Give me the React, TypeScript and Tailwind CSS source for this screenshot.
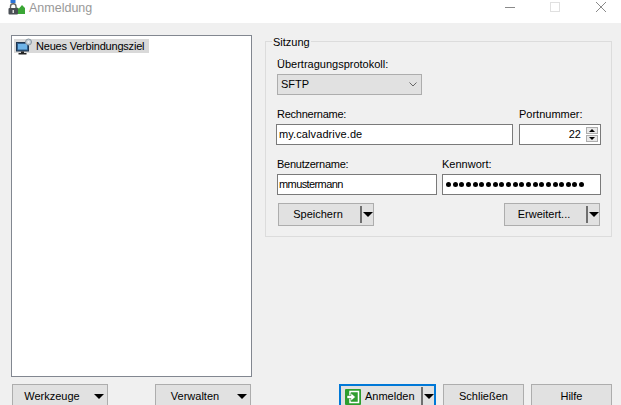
import React from "react";

const font = { fontFamily: '"Liberation Sans", Arial, sans-serif' };

function Caret() {
  return <span className="block h-0 w-0 border-x-[5px] border-t-[5px] border-x-transparent border-t-black" />;
}

function SplitButton({ label }: { label: string }) {
  return (
    <div className="flex h-[23px] w-[96px] items-center border border-[#adadad] bg-[#e1e1e1]">
      <span className="w-[81px] pr-[3px] text-center">{label}</span>
      <span className="h-[17px] w-[2px] bg-[#6f6f6f]" />
      <span className="ml-px"><Caret /></span>
    </div>
  );
}

function Label({ children, tight }: { children: React.ReactNode; tight?: boolean }) {
  return <div className={`h-[18px] leading-[16px] ${tight ? "tracking-[-0.25px]" : ""}`}>{children}</div>;
}

function ComputerIcon() {
  return (
    <svg className="-my-[2px] shrink-0" width="18" height="17" viewBox="0 0 18 17">
      <rect x="1.5" y="4.5" width="12" height="8.5" fill="#2f5e8e" stroke="#20364f" />
      <rect x="3" y="6" width="9" height="5.5" fill="#6fb4e8" />
      <rect x="6" y="13.5" width="3" height="1.5" fill="#222" />
      <rect x="3.5" y="15" width="8" height="1.5" fill="#222" />
      <circle cx="13.5" cy="4" r="3" fill="#c4cfd8" stroke="#8b98a3" />
      <circle cx="13.5" cy="4" r="1" fill="#eef2f5" />
    </svg>
  );
}

function AppIcon() {
  return (
    <svg width="18" height="15" viewBox="0 0 18 15">
      <rect x="2.5" y="0" width="5" height="3" fill="#2b72d6" />
      <path d="M8 7 L11 8.5 L14 5 L17 8 L17 14 L9 14 Z" fill="#3aa635" />
      <path d="M2.5 8 V6.5 a2.75 2.75 0 0 1 5.5 0 V8" fill="none" stroke="#666" strokeWidth="1.4" />
      <rect x="0.5" y="8" width="9.5" height="6.5" rx="1" fill="#4a4f55" />
      <rect x="4.5" y="10" width="1.5" height="3" fill="#ddd" />
    </svg>
  );
}

function LoginIcon() {
  return (
    <svg width="16" height="16" viewBox="0 0 16 16">
      <rect x="0" y="0" width="16" height="16" rx="1" fill="#2e9e2e" />
      <rect x="5" y="2.5" width="8.5" height="11" fill="none" stroke="#fff" strokeWidth="1.5" />
      <path d="M2 6.5 H6 V4 L10.5 8 L6 12 V9.5 H2 Z" fill="#fff" stroke="#1c7a1c" strokeWidth="0.5" />
    </svg>
  );
}

export default function App() {
  return (
    <div className="flex h-[405px] w-[621px] flex-col overflow-hidden bg-[#f0f0f0] text-[11px] text-black" style={font}>
      <header className="flex h-[23px] shrink-0 items-start bg-white">
        <span className="ml-[8px] flex w-[21px]"><AppIcon /></span>
        <span className="pt-px text-[12.5px] leading-[15px] text-[#999]">Anmeldung</span>
        <div className="ml-auto flex h-[14px] items-center">
          <span className="mr-[35px] h-px w-[10px] bg-[#8a8a8a]" />
          <span className="mr-[36px] h-[10px] w-[10px] border border-[#e0e0e0]" />
          <svg className="mr-[15px]" width="10" height="10" viewBox="0 0 10 10">
            <path d="M0 0 L10 10 M10 0 L0 10" stroke="#8a8a8a" strokeWidth="1" />
          </svg>
        </div>
      </header>

      <div className="flex flex-1 flex-col">
        <div className="flex h-[361px] shrink-0">
          <div className="mb-[7px] ml-[11px] mt-[12px] w-[241px] border border-[#828790] bg-white px-[2px] pt-[3px]">
            <div className="flex h-[14px] w-[135px] items-center gap-[3px] whitespace-nowrap bg-[#d9d9d9] pl-[1px] tracking-[-0.2px]">
              <ComputerIcon />
              <span>Neues Verbindungsziel</span>
            </div>
          </div>

          <section className="relative ml-[13px] mt-[18px] h-[196px] w-[347px] border border-[#dcdcdc] pl-[11px] pt-[14px]">
            <span className="absolute -top-[7px] left-[6px] bg-[#f0f0f0] px-px leading-[14px]">Sitzung</span>
            <Label>Übertragungsprotokoll:</Label>
            <div className="flex h-[21px] w-[145px] items-center justify-between border border-[#adadad] bg-[#e1e1e1] pl-[3px] pr-[4px]">
              SFTP
              <svg width="8" height="5" viewBox="0 0 8 5"><path d="M.5.5 L4 4 L7.5.5" fill="none" stroke="#666" /></svg>
            </div>

            <div className="mt-[11px] flex gap-[6px]">
              <div>
                <Label tight>Rechnername:</Label>
                <div className="-ml-px flex h-[21px] w-[237px] items-center border border-[#7a7a7a] bg-white pl-[2px] tracking-[0.1px]">my.calvadrive.de</div>
              </div>
              <div>
                <Label>Portnummer:</Label>
                <div className="flex h-[21px] w-[82px] items-center justify-end border border-[#7a7a7a] bg-white pr-[2px]">
                  <span className="mr-[5px]">22</span>
                  <div className="flex flex-col gap-px">
                    <span className="flex h-[7px] w-[12px] items-center justify-center border border-[#adadad] bg-[#e8e8e8]">
                      <span className="h-0 w-0 border-x-[3px] border-b-[3px] border-x-transparent border-b-black" />
                    </span>
                    <span className="flex h-[7px] w-[12px] items-center justify-center border border-[#adadad] bg-[#e8e8e8]">
                      <span className="h-0 w-0 border-x-[3px] border-t-[3px] border-x-transparent border-t-black" />
                    </span>
                  </div>
                </div>
              </div>
            </div>

            <div className="mt-[11px] flex gap-[5px]">
              <div>
                <Label tight>Benutzername:</Label>
                <div className="flex h-[21px] w-[160px] items-center border border-[#7a7a7a] bg-white pl-px tracking-[-0.6px]">mmustermann</div>
              </div>
              <div>
                <Label>Kennwort:</Label>
                <div className="flex h-[21px] w-[159px] items-center gap-[1.67px] border border-[#7a7a7a] bg-white pl-[3px]">
                  {Array.from({ length: 21 }).map((_, i) => (
                    <span key={i} className="h-[5px] w-[5px] shrink-0 rounded-full bg-black" />
                  ))}
                </div>
              </div>
            </div>

            <div className="ml-px mr-[11px] mt-[8px] flex justify-between">
              <SplitButton label="Speichern" />
              <SplitButton label="Erweitert..." />
            </div>
          </section>
        </div>

        <footer className="flex items-start whitespace-nowrap pl-[12px]">
          <div className="flex h-[25px] w-[96px] items-center border border-[#adadad] bg-[#e1e1e1]">
            <span className="w-[78px] text-center">Werkzeuge</span>
            <span className="ml-[3px]"><Caret /></span>
          </div>
          <div className="ml-[47px] flex h-[25px] w-[96px] items-center border border-[#adadad] bg-[#e1e1e1]">
            <span className="w-[78px] text-center">Verwalten</span>
            <span className="ml-[3px]"><Caret /></span>
          </div>
          <div className="ml-[88px] flex h-[25px] w-[97px] items-center border-2 border-[#0078d7] bg-[#e1e1e1]">
            <span className="ml-[4px] flex"><LoginIcon /></span>
            <span className="ml-[4px] w-[56px]">Anmelden</span>
            <span className="h-[19px] w-[2px] shrink-0 bg-[#6f6f6f]" />
            <span className="ml-px"><Caret /></span>
          </div>
          <div className="ml-[7px] flex h-[25px] w-[81px] items-center justify-center border border-[#adadad] bg-[#e1e1e1]">Schließen</div>
          <div className="ml-[7px] flex h-[25px] w-[81px] items-center justify-center border border-[#adadad] bg-[#e1e1e1]">Hilfe</div>
        </footer>
      </div>
    </div>
  );
}
